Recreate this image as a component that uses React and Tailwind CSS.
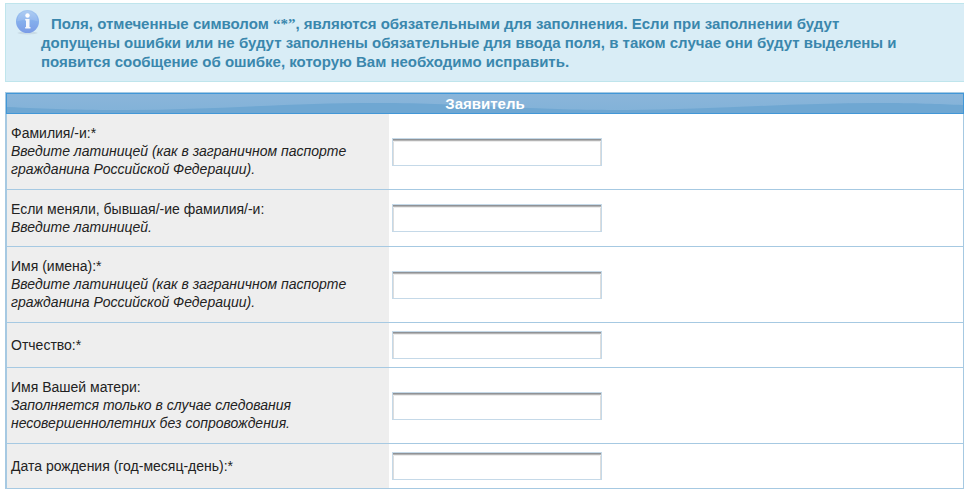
import React from "react";

const IN_LATIN =
  "Введите латиницей (как в заграничном паспорте гражданина Российской Федерации).";

const fields = [
  { id: "surname", label: "Фамилия/-и:*", hint: IN_LATIN, height: "h-19" },
  {
    id: "formerSurname",
    label: "Если меняли, бывшая/-ие фамилия/-и:",
    hint: "Введите латиницей.",
    height: "h-[57px]",
  },
  { id: "name", label: "Имя (имена):*", hint: IN_LATIN, height: "h-19" },
  { id: "patronymic", label: "Отчество:*", height: "h-[45px]" },
  {
    id: "motherName",
    label: "Имя Вашей матери:",
    hint: "Заполняется только в случае следования несовершеннолетних без сопровождения.",
    height: "h-19",
  },
  { id: "birthDate", label: "Дата рождения (год-месяц-день):*", height: "h-[45px]" },
];

function InfoIcon() {
  return (
    <svg className="absolute left-2 top-1 size-8" viewBox="0 0 32 32" aria-hidden="true">
      <defs>
        <linearGradient id="ball" x1="0" y1="0" x2="0" y2="1">
          <stop offset="0" stopColor="#a5c8f1" />
          <stop offset="0.5" stopColor="#84aeec" />
          <stop offset="1" stopColor="#7b9ce6" />
        </linearGradient>
      </defs>
      <ellipse cx="13.5" cy="25" rx="10" ry="1.5" fill="#b9c9d6" opacity="0.5" />
      <circle cx="13.5" cy="13.5" r="11.5" fill="url(#ball)" />
      <path d="M3 13.5a10.5 10.5 0 0 1 21 0q-10 -4 -21 0z" fill="#fff" opacity="0.12" />
      <circle cx="13.5" cy="7.5" r="2.2" fill="#fff" />
      <path d="M11.2 11h4.3v8h1v1.5h-5.3v-1.5h.8v-6.5h-.8z" fill="#f4f7fc" />
    </svg>
  );
}

function Notice() {
  return (
    <div className="relative border border-r-0 border-[#bfe5ec] bg-[#d9edf6] py-[10px] pl-[35px] pr-8 text-[15px] leading-[19px] font-bold text-[#3a87ad]">
      <InfoIcon />
      <p className="indent-[10px]">
        Поля, отмеченные символом{" "}
        <span className="font-['Liberation_Serif',serif] leading-none">“*”</span>, являются
        обязательными для заполнения. Если при заполнении будут
        <br />
        допущены ошибки или не будут заполнены обязательные для ввода поля, в таком случае они
        будут выделены и появится сообщение об ошибке, которую Вам необходимо исправить.
      </p>
    </div>
  );
}

function SectionTitle({ children }) {
  return (
    <div className="relative h-[21px] overflow-hidden border border-[#4297d7] bg-linear-to-b from-[#8ab5da] to-[#82b2d8]">
      {/* wave along the bottom of the bar */}
      <svg
        className="absolute inset-0 size-full"
        viewBox="0 0 956 19"
        preserveAspectRatio="none"
        aria-hidden="true"
      >
        <path
          d="M0 13C40 15 70 16 120 16C200 16 280 9 370 9C420 9 450 11 500 13C540 15 570 16 620 16C700 16 780 9 870 9C910 9 930 10 956 11V19H0z"
          fill="#6fa7d2"
        />
      </svg>
      <h2 className="relative text-center text-[15px] leading-[20px] font-bold text-white">
        {children}
      </h2>
    </div>
  );
}

function FieldRow({ field }) {
  return (
    <div className={`flex border-b border-[#a6c9e2] ${field.height}`}>
      <label
        htmlFor={field.id}
        className="flex w-2/5 flex-col justify-center bg-[#eeeeee] pb-px pl-1 pr-8 text-[14px] leading-[18px] text-[#222222]"
      >
        {field.label}
        {field.hint && <em>{field.hint}</em>}
      </label>
      <div className="flex flex-1 items-center pl-[3px]">
        <input
          id={field.id}
          type="text"
          className="h-7 w-[210px] border border-[#c5d9e8] bg-white px-1 text-[14px] shadow-[inset_0_1px_0_#8f9296,inset_0_2px_0_#b4b4b4,inset_0_3px_0_#ececec,inset_1px_0_0_#dddddd,inset_-1px_0_0_#dddddd] outline-none"
        />
      </div>
    </div>
  );
}

export default function App() {
  return (
    <main className="bg-white pt-[3px] pl-[5px] font-['Liberation_Sans',Arial,sans-serif]">
      <Notice />
      <form className="mt-[10px] border border-b-0 border-l-2 border-[#a6c9e2]">
        <div className="-ml-px -mr-px">
          <SectionTitle>Заявитель</SectionTitle>
        </div>
        {fields.map((f) => (
          <FieldRow key={f.id} field={f} />
        ))}
      </form>
    </main>
  );
}
